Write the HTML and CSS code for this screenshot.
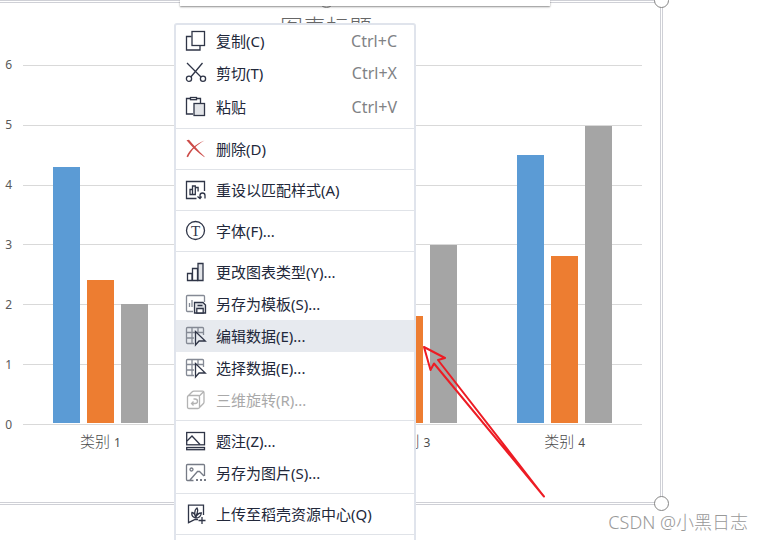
FILE: index.html
```html
<!DOCTYPE html>
<html lang="zh-CN">
<head>
<meta charset="utf-8">
<title>图表</title>
<link rel="stylesheet" href="styles.css">
</head>
<body>
<main class="page">
  <section class="chart">
    <h1 class="chart-title">图表标题</h1>
    <div class="chart-body">
      <div class="y-axis"><span>6</span><span>5</span><span>4</span><span>3</span><span>2</span><span>1</span><span>0</span></div>
      <div class="plot">
        <div class="gridlines"><i></i><i></i><i></i><i></i><i></i><i></i></div>
        <div class="groups">
          <div class="group"><b class="bar s1" style="height:71.67%"></b><b class="bar s2" style="height:40%"></b><b class="bar s3" style="height:33.33%"></b></div>
          <div class="group"><b class="bar s1" style="height:41.67%"></b><b class="bar s2" style="height:73.33%"></b><b class="bar s3" style="height:33.33%"></b></div>
          <div class="group"><b class="bar s1" style="height:58.33%"></b><b class="bar s2" style="height:30%"></b><b class="bar s3" style="height:50%"></b></div>
          <div class="group"><b class="bar s1" style="height:75%"></b><b class="bar s2" style="height:46.67%"></b><b class="bar s3" style="height:83.33%"></b></div>
        </div>
      </div>
      <div class="x-axis"><span>类别 <small>1</small></span><span></span><span>类别 <small>3</small></span><span>类别 <small>4</small></span></div>
    </div>
    <span class="handle handle-top"></span>
    <span class="handle handle-top-right"></span>
    <span class="handle handle-bottom-right"></span>
  </section>

  <div class="toolbar"></div>

  <ul class="menu">
    <li><button class="item"><svg class="icon" viewBox="0 0 20 20"><path d="M5.500 5.500h-5v13.500h13.500v-4"/><rect x="6" y=".5" width="12.500" height="14"/></svg><span>复制(C)</span><kbd>Ctrl+C</kbd></button></li>
    <li><button class="item"><svg class="icon" viewBox="0 0 20 20"><path d="M1 0l14 14M16.500 0L4.800 14"/><circle cx="3" cy="15.800" r="2.600"/><circle cx="17" cy="15.800" r="2.600"/></svg><span>剪切(T)</span><kbd>Ctrl+X</kbd></button></li>
    <li><button class="item tall"><svg class="icon" viewBox="0 0 20 20"><path d="M4.500 1.500h-4v15.500H7M10.500 1.500H14.500V6"/><rect x="4.500" y=".5" width="6" height="2.200"/><rect class="shade" x="8" y="6.500" width="10.500" height="12"/></svg><span>粘贴</span><kbd>Ctrl+V</kbd></button></li>
    <li class="sep"></li>
    <li><button class="item"><svg class="icon" viewBox="0 0 20 20"><path class="red" d="M.5 1.200L3 .8C7 5.500 12 11.500 18.500 17.500v.8C11.500 13.500 6 8 .5 1.200z"/><path class="red" d="M18.500 1.500C11.500 5.500 5.500 10.500 2 18.300L.5 17.500C4 10 10.500 4.500 18.500 1.500z"/></svg><span>删除(D)</span></button></li>
    <li class="sep"></li>
    <li><button class="item"><svg class="icon" viewBox="0 0 20 20"><path d="M10.500 18.500H.5v-17h18V11"/><path d="M4 9.500h2.500v5H4zM6.500 6h2.800v8.500H6.500zM9.300 7.500h2.800v4M14 18.500v-3a2.500 2.500 0 0 1 5 0v3M11.500 16.500l2.500 2 1.500-2"/></svg><span>重设以匹配样式(A)</span></button></li>
    <li class="sep"></li>
    <li><button class="item"><svg class="icon" viewBox="0 0 20 20"><circle cx="9.500" cy="9.500" r="9"/><text class="letter" x="9.500" y="14.500">T</text></svg><span>字体(F)...</span></button></li>
    <li class="sep"></li>
    <li><button class="item"><svg class="icon" viewBox="0 0 20 20"><path d="M1.500 11.500H6v7H1.500zM6.500 6.500h5v12h-5z"/><path class="shade" d="M12 1.500h5v17h-5z"/></svg><span>更改图表类型(Y)...</span></button></li>
    <li><button class="item"><svg class="icon" viewBox="0 0 20 20"><path class="soft" d="M7 17.500H1.500q-1 0-1-1v-14q0-1 1-1h16q1 0 1 1V8M3.500 9v4M6 6v7"/><path class="shade" d="M8.500 8.500h8.500l2.500 2.500v8H8.500z"/><path class="paper" d="M10.800 14.500h6.400V19h-6.400zM11.500 11.500h5"/></svg><span>另存为模板(S)...</span></button></li>
    <li><button class="item active"><svg class="icon" viewBox="0 0 20 20"><path class="soft" d="M8 17.500H1.500q-1 0-1-1v-14q0-1 1-1h15q1 0 1 1V9M1 6.500h16M1 12h7M6 2v15M12 2v5"/><path class="paper" d="M9.500 5.500v13.500l3.500-4h6.300z"/></svg><span>编辑数据(E)...</span></button></li>
    <li><button class="item"><svg class="icon" viewBox="0 0 20 20"><path class="soft" d="M8 17.500H1.500q-1 0-1-1v-14q0-1 1-1h15q1 0 1 1V9M1 6.500h16M1 12h7M6 2v15M12 2v5"/><path class="paper" d="M9.500 5.500v13.500l3.500-4h6.300z"/></svg><span>选择数据(E)...</span></button></li>
    <li><button class="item" disabled><svg class="icon" viewBox="0 0 20 20"><path d="M1.500 7Q1.500 5.500 3 5.500h9.500Q13.500 5.500 13.500 7v10Q13.500 18.500 12 18.500H3Q1.500 18.500 1.500 17zM2 6l4-4q.8-.8 2-.8h8.500q1.500 0 1.500 1.500V12q0 1-.8 1.800l-4 4M13.300 6l4-4"/><path d="M7.500 9h1.500q2.500 0 2.500 2.200T9 13.500H5.500M7.500 11.500l-2 2 2 2"/></svg><span>三维旋转(R)...</span></button></li>
    <li class="sep"></li>
    <li><button class="item"><svg class="icon" viewBox="0 0 20 20"><rect x=".7" y="1.500" width="17.800" height="12.300"/><path d="M1 10l5-5 8 8.500"/><rect class="shade" x=".7" y="16.500" width="17.800" height="2.200"/></svg><span>题注(Z)...</span></button></li>
    <li><button class="item"><svg class="icon icon-soft" viewBox="0 0 20 20"><path d="M7.500 17.500h-6q-1 0-1-1v-14q0-1 1-1h16q1 0 1 1V13M4 17l7.500-8.500h2l4.500 4.500"/><circle cx="5.500" cy="6.500" r="1.500"/><path class="dots" d="M10 17h2M14 17h2M18 17h2"/></svg><span>另存为图片(S)...</span></button></li>
    <li class="sep"></li>
    <li><button class="item"><svg class="icon" viewBox="0 0 20 20"><path d="M17.500 11V1.200H2.500v17.500L9 15.500h3M12.500 16.500h7M16 13v7"/><path d="M9.500 14C6.500 13 5.500 10.500 6 8.500c2 .5 3.500 2.500 3.500 5.500M9.500 13C8 8.500 9 5.500 11 4c1.500 2.500.5 5.500-1.500 9M9.500 14c3 0 5.500-1.500 5.800-5-2.800 0-4.800 2-5.800 5"/></svg><span>上传至稻壳资源中心(Q)</span></button></li>
    <li class="sep"></li>
  </ul>

  <svg class="arrow" viewBox="0 0 126 156"><path d="M4 4l21 11-7 2L124 153.500 14 20.500l-3.500 6.500z"/></svg>
  <p class="watermark">CSDN @小黑日志</p>
</main>
</body>
</html>
```
FILE: styles.css
```css
* { box-sizing: border-box; }

body {
  margin: 0;
  background: #fff;
  font-family: "Noto Sans", "Noto Sans CJK SC", sans-serif;
}

.page {
  position: relative;
  height: 100vh;
  overflow: hidden;
}

/* Chart */
.chart {
  position: relative;
  margin-right: 99px;
  padding: 6px 18px 49px 0;
  border: 3px double #cfd0d6;
  border-left: 0;
}

.chart-title {
  margin: 0 0 20px 10px;
  font-size: 23px;
  font-weight: 300;
  line-height: 36px;
  text-align: center;
  color: #666;
}

.chart-body {
  display: grid;
  grid-template-columns: 23px 1fr;
}

.y-axis {
  display: flex;
  flex-direction: column;
  justify-content: space-between;
  margin: -10px 0;
  padding-right: 11px;
  font-size: 12px;
  line-height: 20px;
  text-align: right;
  color: #595959;
}

.plot {
  display: grid;
  height: 360px;
  border-bottom: 1px solid #d9d9d9;
}

.gridlines,
.groups {
  grid-area: 1 / 1;
  display: flex;
}

.gridlines { flex-direction: column; }

.gridlines i {
  flex: 1;
  border-top: 1px solid #d9d9d9;
}

.groups { padding: 1px 0; }

.group {
  flex: 1;
  display: flex;
  justify-content: center;
  align-items: flex-end;
  gap: 7px;
}

.bar { width: 27px; }
.s1 { background: #5b9bd5; }
.s2 { background: #ed7d31; }
.s3 { background: #a5a5a5; }

.x-axis {
  grid-column: 2;
  display: flex;
  padding-top: 6px;
  font-size: 15px;
  font-weight: 300;
  line-height: 20px;
  color: #4d4d4d;
}

.x-axis span {
  flex: 1;
  text-align: center;
}

.x-axis small {
  font-size: 12px;
  font-weight: 400;
}

.handle {
  position: absolute;
  width: 15px;
  height: 15px;
  border: 1px solid #858585;
  border-radius: 50%;
  background: #fff;
}

.handle-top { top: -10px; left: 319px; }
.handle-top-right { top: -10px; right: -9px; }
.handle-bottom-right { bottom: -9px; right: -9px; }

.toolbar {
  position: absolute;
  top: 0;
  left: 180px;
  width: 370px;
  height: 6px;
  background: #fff;
  box-shadow: 0 1px 2px rgba(0, 0, 0, .45);
}

/* Context menu */
.menu {
  position: absolute;
  top: 23px;
  left: 174px;
  width: 242px;
  margin: 0;
  padding: 0 0 16px;
  list-style: none;
  border: 2px solid #e0e4ec;
  border-radius: 3px;
  background: #fff;
}

.item {
  display: flex;
  align-items: center;
  gap: 10px;
  width: 100%;
  height: 32px;
  padding: 0 17px 0 10px;
  border: 0;
  background: none;
  font: 15px/20px "Noto Sans", "Noto Sans CJK SC", sans-serif;
  color: #22283a;
  text-align: left;
}

.item.tall { height: 35px; }
.item.active { background: #e7eaef; }
.item:disabled { color: #a9a9a9; }

.item kbd {
  margin-left: auto;
  font: 16px/20px "Noto Sans", sans-serif;
  color: #808285;
}

.sep {
  height: 1px;
  margin: 4px 0;
  background: #e0e3e8;
}

.icon {
  flex: none;
  width: 20px;
  height: 20px;
  overflow: visible;
  fill: none;
  stroke: #2f3547;
  stroke-width: 1.3;
}

.item:disabled .icon { stroke: #b3b3b3; }
.icon-soft { stroke: #767b86; }
.icon .soft { stroke: #858a95; }
.icon .shade { fill: #e2e4e8; }
.icon .paper { fill: #fff; }
.active .icon .paper { fill: #e7eaef; }
.icon .red { fill: #cc4b48; stroke: none; }
.icon .dots { stroke-width: 2; }

.icon .letter {
  fill: #2f3547;
  stroke: none;
  font: 15px "Liberation Serif", serif;
  text-anchor: middle;
}

/* Annotation */
.arrow {
  position: absolute;
  top: 343px;
  left: 420px;
  width: 126px;
  height: 156px;
  fill: none;
  stroke: #ed1c24;
  stroke-width: 2;
  stroke-linejoin: round;
}

.watermark {
  position: absolute;
  right: 14px;
  bottom: 6px;
  margin: 0;
  font-size: 18px;
  font-weight: 300;
  line-height: 24px;
  color: #999;
}
```
